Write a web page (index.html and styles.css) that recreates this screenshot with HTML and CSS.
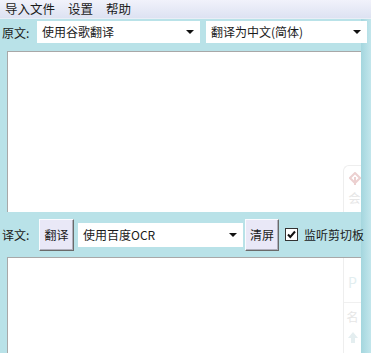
FILE: index.html
```html
<!DOCTYPE html>
<html lang="zh-CN">
<head>
    <meta charset="UTF-8">
    <title>翻译</title>
    <link rel="stylesheet" href="styles.css">
</head>
<body>
    <!-- Menu -->
    <div class="menubar">
        <span class="menu-item">导入文件</span>
        <span class="menu-item">设置</span>
        <span class="menu-item">帮助</span>
    </div>

    <!-- Source row -->
    <div class="row source-row">
        <span class="label">原文:</span>
        <div class="combo combo-engine">使用谷歌翻译<i class="arrow"></i></div>
        <div class="combo combo-lang">翻译为中文(简体)<i class="arrow"></i></div>
    </div>

    <div class="text-box top-box">
        <div class="ghost ghost-top">
            <svg class="ghost-icon" width="12" height="14" viewBox="0 0 12 14">
                <path d="M6 1 L11 6 L6 11 L1 6 Z" fill="none" stroke="#ecd0d0" stroke-width="2"/>
                <path d="M6 5 L6 13" stroke="#ecd0d0" stroke-width="2"/>
            </svg>
            <span class="ghost-char">会</span>
        </div>
    </div>

    <!-- Result row -->
    <div class="row result-row">
        <span class="label">译文:</span>
        <button class="btn btn-translate">翻译</button>
        <div class="combo combo-ocr">使用百度OCR<i class="arrow"></i></div>
        <button class="btn btn-clear">清屏</button>
        <svg class="checkbox" width="13" height="13" viewBox="0 0 13 13">
            <rect x="0.5" y="0.5" width="12" height="12" fill="#fff" stroke="#333"/>
            <path d="M3 6.5 L5.3 9 L10 3.5" fill="none" stroke="#111" stroke-width="2"/>
        </svg>
        <span class="check-label">监听剪切板</span>
    </div>

    <div class="text-box bottom-box">
        <div class="ghost ghost-bottom">
            <span class="ghost-char ghost-p">P</span>
            <span class="ghost-char">名</span>
            <svg class="ghost-icon" width="12" height="14" viewBox="0 0 12 14">
                <path d="M6 2 L11 8 L8 8 L8 13 L4 13 L4 8 L1 8 Z" fill="#e4eef0"/>
            </svg>
        </div>
    </div>
</body>
</html>
```

FILE: styles.css
```css
body, html {
    margin: 0;
    height: 100%;
    overflow: hidden;
}

body {
    font-family: "Noto Sans CJK SC", "Liberation Sans", sans-serif;
    font-size: 12px;
    color: #1a1a1a;
    background: linear-gradient(to right, #b9e2e8 361px, #a4d6de 361px, #c2e6ec 371px);
}

.menubar {
    height: 18px;
    display: flex;
    align-items: center;
    padding-left: 5px;
    background: linear-gradient(#f1f2fb, #dde2f2);
    border-bottom: 1px solid #e9eef6;
    font-size: 12.5px;
}

.menu-item {
    margin-right: 13px;
    line-height: 18px;
}

.row {
    display: flex;
    align-items: center;
}

.label {
    width: 35px;
    padding-left: 2px;
}

.source-row {
    margin-top: 2px;
    height: 22px;
}

.combo {
    position: relative;
    height: 22px;
    line-height: 22px;
    background: #fff;
    padding-left: 5px;
    box-sizing: border-box;
}

.arrow {
    position: absolute;
    right: 6px;
    top: 9px;
    border-left: 4px solid transparent;
    border-right: 4px solid transparent;
    border-top: 4px solid #111;
}

.combo-engine {
    width: 163px;
}

.combo-lang {
    width: 161px;
    margin-left: 6px;
}

.text-box {
    position: relative;
    margin-left: 7px;
    width: 354px;
    background: #fff;
    border-top: 1px solid #a8a8a8;
    border-left: 1px solid #a8a8a8;
    box-sizing: border-box;
    overflow: hidden;
}

.top-box {
    margin-top: 8px;
    height: 161px;
}

.result-row {
    height: 33px;
    margin-top: 6px;
}

.btn {
    font: inherit;
    color: #1a1a1a;
    height: 32px;
    padding: 0;
    background: #e9e8f7;
    border: 1px solid;
    border-color: #fbfbff #6a6a6a #6a6a6a #fbfbff;
    box-shadow: inset -1px -1px #b0b0bc;
}

.btn-translate {
    width: 35px;
    margin-left: 2px;
}

.combo-ocr {
    width: 165px;
    height: 24px;
    line-height: 24px;
    margin-left: 4px;
}

.combo-ocr .arrow {
    top: 10px;
}

.btn-clear {
    width: 34px;
    margin-left: 2px;
}

.checkbox {
    margin-left: 6px;
}

.check-label {
    margin-left: 6px;
}

.bottom-box {
    margin-top: 6px;
    height: 110px;
}

/* faint floating panel showing through on the right */
.ghost {
    position: absolute;
    left: 335px;
    width: 18px;
    display: flex;
    flex-direction: column;
    align-items: center;
    color: #e6e6e6;
    font-size: 12px;
}

.ghost-top {
    top: 113px;
    height: 60px;
    border-top: 1px solid #eeeeee;
    border-left: 1px solid #eeeeee;
    border-top-left-radius: 6px;
    padding-top: 6px;
    padding-left: 4px;
    box-sizing: border-box;
}

.ghost-top .ghost-char {
    margin-top: 3px;
}

.ghost-bottom {
    top: 0;
    height: 110px;
    border-left: 1px solid #eeeeee;
    padding-top: 14px;
    box-sizing: border-box;
}

.ghost-p {
    font-size: 14px;
    color: #e2eef0;
    line-height: 20px;
    padding-bottom: 10px;
    border-bottom: 1px solid #f0f0f0;
    width: 100%;
    text-align: center;
}

.ghost-bottom .ghost-char {
    margin-bottom: 5px;
}
```
